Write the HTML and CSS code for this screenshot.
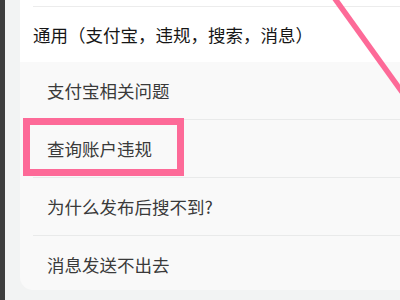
FILE: index.html
```html
<!DOCTYPE html>
<html lang="zh">
<head>
<meta charset="utf-8">
<link rel="stylesheet" href="styles.css">
</head>
<body>
<div class="screen">
  <div class="edge"></div>
  <div class="main">
    <div class="card">
      <div class="group">
        <div class="group-title">通用（支付宝，违规，搜索，消息）</div>
      </div>
      <ul class="sub">
        <li class="item">支付宝相关问题</li>
        <li class="item">查询账户违规</li>
        <li class="item">为什么发布后搜不到?</li>
        <li class="item">消息发送不出去</li>
      </ul>
    </div>
  </div>
  <div class="highlight"></div>
  <svg class="arrow" width="400" height="300" viewBox="0 0 400 300">
    <line x1="333" y1="-4" x2="402" y2="92" stroke="#fd6a98" stroke-width="5.5"/>
  </svg>
</div>
</body>
</html>
```

FILE: styles.css
```css
html, body {
  margin: 0;
  padding: 0;
}
body {
  width: 400px;
  height: 300px;
  overflow: hidden;
  font-family: "Noto Sans CJK SC", "Noto Sans", sans-serif;
}
.screen {
  position: relative;
  display: flex;
  width: 400px;
  height: 300px;
  background: #f2f3f3;
}
.edge {
  width: 5px;
  background: #3d3d3d;
  flex: none;
}
.main {
  flex: 1;
  padding-left: 15px;
  padding-bottom: 10px;
  display: flex;
  flex-direction: column;
}
.card {
  flex: 1;
  background: #f9f9f9;
  border-bottom-left-radius: 13px;
  overflow: hidden;
  display: flex;
  flex-direction: column;
}
.group {
  background: #ffffff;
  padding-top: 6px;
  padding-left: 13px;
}
.group-title {
  border-top: 1.5px solid #ececec;
  height: 54.5px;
  line-height: 56px;
  font-size: 17.5px;
  color: #161616;
  white-space: nowrap;
}
.sub {
  list-style: none;
  margin: 0;
  padding: 0 0 0 13px;
}
.item {
  height: 57px;
  line-height: 57px;
  padding-left: 14px;
  font-size: 17.5px;
  color: #3a3a3a;
  white-space: nowrap;
  border-top: 1.5px solid #e9eaea;
}
.item:first-child {
  border-top: none;
}
.highlight {
  position: absolute;
  left: 23px;
  top: 118px;
  width: 161px;
  height: 58px;
  box-sizing: border-box;
  border: 7px solid #fd6a98;
}
.arrow {
  position: absolute;
  left: 0;
  top: 0;
}
```
